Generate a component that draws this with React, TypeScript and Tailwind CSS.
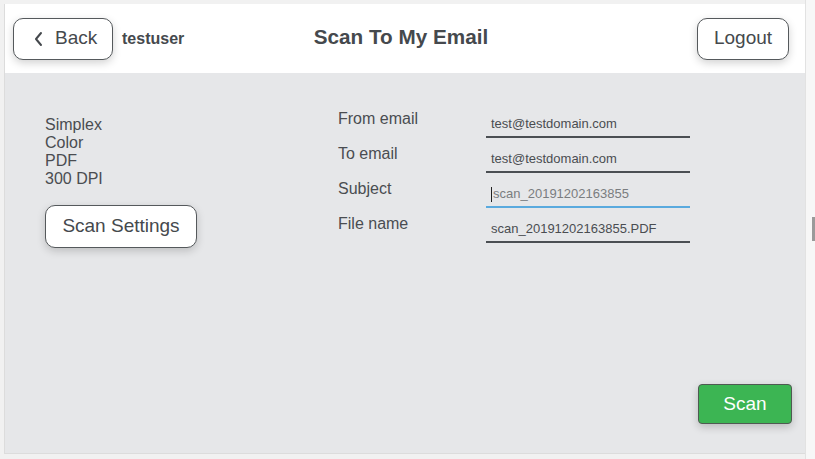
import React from "react";

const font = { fontFamily: '"Liberation Sans", Arial, sans-serif' };

function Field({ label, value, active }: { label: string; value: string; active?: boolean }) {
  return (
    <div className="flex h-[35px] items-start">
      <div className="w-[148px] text-[16px] leading-[18px] text-[#4a4d51]">{label}</div>
      <div
        className={`flex h-[28px] w-[204px] items-center pl-[5px] pt-[2px] text-[13px] ${
          active ? "border-b-2 border-[#5aaade] text-[#7a7d80]" : "border-b-2 border-[#4b4f53] text-[#4a4d51]"
        }`}
      >
        {active && <span className="mr-[1px] inline-block h-[15px] w-px bg-[#222]" />}
        <span>{value}</span>
      </div>
    </div>
  );
}

export default function App() {
  return (
    <div className="flex h-[459px] w-[815px] bg-[#f1f1f1]" style={font}>
      <div className="ml-[4px] mt-[4px] flex h-[450px] w-[801px] flex-col border-b border-l border-[#dcdcdc]">
        <header className="grid h-[69px] shrink-0 grid-cols-[1fr_auto_1fr] items-center bg-white pl-[8px] pr-[16px]">
          <div className="flex items-center">
            <button className="flex h-[42px] w-[100px] items-center rounded-[10px] border border-[#55595c] bg-white pl-[19px] text-[19px] text-[#45494d] shadow-[0_3px_8px_rgba(0,0,0,0.18)]">
              <svg width="11" height="18" viewBox="0 0 11 18" fill="none" className="mr-[11px]">
                <path d="M8 3 L3 9 L8 15" stroke="#45494d" strokeWidth="2" strokeLinecap="round" strokeLinejoin="round" />
              </svg>
              Back
            </button>
            <span className="ml-[9px] mt-[1px] text-[16px] font-bold text-[#45494d]">testuser</span>
          </div>
          <h1 className="-mt-[3px] text-[20.7px] font-bold text-[#45494d]">Scan To My Email</h1>
          <div className="flex justify-end">
            <button className="h-[42px] w-[92px] rounded-[10px] border border-[#55595c] bg-white text-[19px] text-[#45494d] shadow-[0_3px_8px_rgba(0,0,0,0.18)]">
              Logout
            </button>
          </div>
        </header>
        <main className="flex flex-1 flex-col bg-[#e6e7e9]">
          <div className="flex pt-[37px]">
            <div className="w-[333px] pl-[40px] pt-[6px]">
              <div className="text-[16px] leading-[18px] text-[#4a4d51]">
                <div>Simplex</div>
                <div>Color</div>
                <div>PDF</div>
                <div>300 DPI</div>
              </div>
              <button className="mt-[17px] h-[43px] w-[152px] rounded-[10px] border border-[#55595c] bg-white text-[19px] text-[#45494d] shadow-[0_3px_8px_rgba(0,0,0,0.18)]">
                Scan Settings
              </button>
            </div>
            <div className="flex flex-col">
              <Field label="From email" value="test@testdomain.com" />
              <Field label="To email" value="test@testdomain.com" />
              <Field label="Subject" value="scan_20191202163855" active />
              <Field label="File name" value="scan_20191202163855.PDF" />
            </div>
          </div>
          <div className="mt-auto flex justify-end pb-[29px] pr-[13px]">
            <button className="h-[40px] w-[94px] rounded-[4px] border border-[#4f5a52] bg-[#3cb553] text-[19px] text-white shadow-[0_3px_8px_rgba(0,0,0,0.2)]">
              Scan
            </button>
          </div>
        </main>
      </div>
      <div className="flex h-full w-[10px] justify-end border-l border-[#e2e2e2] bg-[#f7f7f7]">
        <div className="mt-[217px] h-[24px] w-[3px] bg-[#9a9a9a]" />
      </div>
    </div>
  );
}
